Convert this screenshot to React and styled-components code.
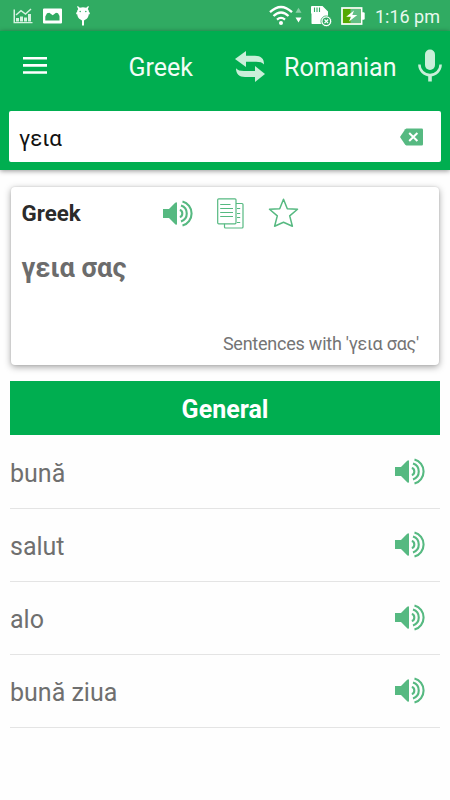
import React from "react";
import styled, { createGlobalStyle } from "styled-components";

const GlobalStyle = createGlobalStyle`
  *, *::before, *::after { box-sizing: border-box; }
  body { margin: 0; background: #fefefe; font-family: Roboto, "Noto Sans", sans-serif; }
`;

const Screen = styled.main`
  width: 450px;
  height: 800px;
  overflow: hidden;
  background: #fefefe;
`;

const StatusBar = styled.div`
  display: flex;
  align-items: center;
  justify-content: space-between;
  height: 31px;
  padding: 0 10px 0 13px;
  background: #30ab62;
`;

const StatusGroup = styled.div`
  display: flex;
  align-items: center;
  gap: ${(p) => p.$gap};
`;

const Clock = styled.time`
  color: #e8f8ee;
  font-size: 18px;
  line-height: 31px;
  margin: 2px 0 0 1px;
`;

const Header = styled.header`
  height: 139px;
  background: #00ae50;
  box-shadow: 0 1px 5px rgba(0, 0, 0, 0.42);
`;

const Toolbar = styled.div`
  display: grid;
  grid-template-columns: 105.5px 106.5px 49px 134px 24px;
  align-items: center;
  height: 70px;
  padding-left: 23px;
`;

const Language = styled.span`
  color: #f2fcf6;
  font-size: 25px;
  line-height: 30px;
  padding-top: 4px;
`;

const IconButton = styled.button`
  display: block;
  padding: 0;
  border: 0;
  background: none;
  line-height: 0;
  svg { display: block; }
`;

const MenuButton = styled(IconButton)`
  padding-bottom: 2px;
`;

const SearchBox = styled.div`
  display: flex;
  align-items: center;
  justify-content: space-between;
  height: 51px;
  margin: 10px 9px 0;
  padding: 0 18px 0 10px;
  border-radius: 2px;
  background: #fff;
`;

const Query = styled.span`
  color: #111;
  font-size: 22.3px;
  line-height: 28px;
  padding-top: 2px;
`;

const Card = styled.section`
  display: flex;
  flex-direction: column;
  height: 178px;
  margin: 17px 11px 16px;
  padding: 11px 20px 9px 10.5px;
  border-radius: 4px;
  background: #fff;
  box-shadow: 0 2px 7px rgba(0, 0, 0, 0.36), 0 0 2px rgba(0, 0, 0, 0.12);
`;

const CardHead = styled.div`
  display: grid;
  grid-template-columns: 141.5px 54px 51px 31px;
  align-items: center;
  height: 31px;
`;

const CardLabel = styled.h2`
  margin: 0;
  padding-bottom: 2px;
  color: #2b2b2b;
  font-size: 22.3px;
  line-height: 28px;
  font-weight: 700;
`;

const Word = styled.p`
  flex: 1;
  margin: 22px 0 0;
  color: #6c6c6c;
  font-size: 27.2px;
  line-height: 34px;
  font-weight: 700;
`;

const Sentences = styled.a`
  align-self: flex-end;
  color: #747474;
  font-size: 18px;
  line-height: 24px;
  letter-spacing: -0.23px;
`;

const SectionTitle = styled.h3`
  height: 54px;
  margin: 0 10px;
  padding-top: 2px;
  background: #00ae50;
  color: #fff;
  text-align: center;
  font-size: 25px;
  line-height: 54px;
  font-weight: 700;
`;

const List = styled.ul`
  margin: 0 10px 0;
  padding: 0;
  list-style: none;
`;

const Row = styled.li`
  display: flex;
  align-items: center;
  justify-content: space-between;
  height: 73px;
  padding: 1px 14px 0 0;
  box-shadow: 0 1px 0 #e4e4e4;
`;

const Translation = styled.span`
  color: #6f6f6f;
  font-size: 25px;
  line-height: 34px;
  padding-top: 3px;
`;

const ICON_GREEN = "#56b981";

const Speaker = () => (
  <svg width="31" height="28" viewBox="0 0 31 28" fill="none" stroke={ICON_GREEN} strokeWidth="2.1">
    <path d="M0 9H6L12.2 2.8Q14 1.5 14 3.2V23.8Q14 25.5 12.2 24.2L6 18H0Z" fill={ICON_GREEN} stroke="none" />
    <path d="M16.8 10Q19.3 10.6 19.3 13.5Q19.3 16.4 16.8 17" />
    <path d="M18 5.6A8.3 8.3 0 0 1 18 21.4" />
    <path d="M19.5 1.4A12.6 12.6 0 0 1 19.5 25.6" />
  </svg>
);

const Copy = () => (
  <svg width="27" height="31" viewBox="0 0 27 31" fill="#fff" stroke={ICON_GREEN} strokeWidth="1.2">
    <rect x="7.5" y="5.5" width="18.5" height="24.5" rx="1" />
    <path d="M20 10.5H23.2M20 15.5H23.2M20 19.5H23.2M20 24.5H23.2" />
    <rect x="0.7" y="0.8" width="18.3" height="25" rx="1" />
    <path d="M3.2 6.5H13.5M3.2 10.5H16M3.2 14.5H16M3.2 18.5H16" />
  </svg>
);

const Star = () => (
  <svg width="31" height="31" viewBox="0 0 31 31" fill="none" stroke={ICON_GREEN} strokeWidth="1.5" strokeLinejoin="round">
    <path d="M15.5 1.3L19.3 10.7L29.5 11.3L21.7 17.9L24.4 28.3L15.5 24.2L6.6 28.3L9.3 17.9L1.5 11.3L11.7 10.7Z" />
  </svg>
);

const Menu = () => (
  <svg width="24" height="17" viewBox="0 0 24 17" fill="#fff">
    <path d="M0 0H24V2.6H0ZM0 7.1H24V9.7H0ZM0 14.2H24V16.8H0Z" />
  </svg>
);

const Swap = () => (
  <svg width="30" height="31" viewBox="0 0 30 31" fill="#c9efd9">
    <path d="M0 8L11 0V4.7H20C26 4.7 29 7.5 29 13.4C27.3 11.3 25 10.7 21 10.7H11V16Z" />
    <path d="M30 23L20 31V26H10C4 26 1 23 1 17.3C2.8 19.5 5 20 9 20H20V15Z" />
  </svg>
);

const Microphone = () => (
  <svg width="24" height="34" viewBox="0 0 24 34" fill="none">
    <rect x="7" y="0.5" width="10" height="20.5" rx="5" fill="#c9efd9" />
    <path d="M1.4 15.5A10.6 10.6 0 0 0 22.6 15.5" stroke="#c9efd9" strokeWidth="2.5" />
    <path d="M12 26V32.5" stroke="#c9efd9" strokeWidth="3.6" />
  </svg>
);

const Clear = () => (
  <svg width="23" height="18" viewBox="0 0 23 18" fill="none">
    <path d="M6.4 0.5H21.7Q23 0.5 23 1.8V16.2Q23 17.5 21.7 17.5H6.4L5.2 16.8L0 9L5.2 1.2Z" fill={ICON_GREEN} />
    <path d="M9.2 5L17.4 13M17.4 5L9.2 13" stroke="#fff" strokeWidth="2" />
  </svg>
);

const ChartIcon = () => (
  <svg width="20" height="16" viewBox="0 0 20 16" fill="#d5f2e0">
    <path d="M0.5 1.5H2V14H19.5V15.2H0.5ZM3 10H6V13.5H3ZM7 8.5H10V13.5H7ZM11 9.5H14V13.5H11ZM15 6H18V13.5H15Z" />
    <path d="M3 7L8 2.7L12.5 6L18 1" fill="none" stroke="#d5f2e0" strokeWidth="1.5" />
  </svg>
);

const PictureIcon = () => (
  <svg width="19" height="16" viewBox="0 0 19 16">
    <path fillRule="evenodd" fill="#fff" d="M1 0.5H18Q19 0.5 19 1.5V14.5Q19 15.5 18 15.5H1Q0 15.5 0 14.5V1.5Q0 0.5 1 0.5ZM2.3 12.5H16.5V8L15 5.3L13 4.8L9.7 7.2L6.3 4.8L4 5.3L2.3 8.5Z" />
  </svg>
);

const DroidIcon = () => (
  <svg width="14" height="20" viewBox="0 0 14 20">
    <path d="M1.8 0L3.8 1.8Q7 0.8 10.2 1.8L12.2 0L12.9 0.7L11.8 3Q13 4.5 13 6.3L13.8 6.6V8.2L12.8 8.3Q12.4 12.2 9.5 13.6L8 14.5V19.5H6V14.5L4.5 13.6Q1.6 12.2 1.2 8.3L0.2 8.2V6.6L1 6.3Q1 4.5 2.2 3L1.1 0.7Z" fill="#fff" />
    <circle cx="4.2" cy="5.5" r="0.75" fill="#30ab62" />
    <circle cx="9.8" cy="5.5" r="0.75" fill="#30ab62" />
  </svg>
);

const WifiIcon = () => (
  <svg width="33" height="21" viewBox="0 0 33 21" fill="none" stroke="#fff" strokeWidth="2.3">
    <path d="M1 7.2Q12 -3.2 23 7.2M4.5 11Q12 4 19.5 11M8 14.6Q12 11.2 16 14.6" />
    <circle cx="12" cy="18" r="2" fill="#fff" stroke="none" />
    <path d="M26.5 7.8L29.5 2.7L32.5 7.8Z" fill="#8ad0a7" stroke="none" />
    <path d="M26.5 12.5H32.5L29.5 17.6Z" fill="#fff" stroke="none" />
  </svg>
);

const StorageIcon = () => (
  <svg width="21" height="22" viewBox="0 0 21 22" fill="none">
    <path d="M1 1H11.5L17 6.5V19H1Q0.5 19 0.5 18V9L0 8V2Q0 1 1 1Z" fill="#fff" />
    <path d="M3.5 2.5V7M6 2.5V7M8.5 2.5V7" stroke="#30ab62" strokeWidth="1.1" />
    <circle cx="15.3" cy="16.3" r="5.4" fill="#fff" stroke="#30ab62" strokeWidth="0.8" />
    <circle cx="15.3" cy="16.3" r="3.7" fill="#30ab62" />
    <path d="M13.5 14.5L17.1 18.1M17.1 14.5L13.5 18.1" stroke="#fff" strokeWidth="1.3" />
  </svg>
);

const BatteryIcon = () => (
  <svg width="24" height="18" viewBox="0 0 24 18" fill="none">
    <rect x="1" y="1" width="19.6" height="16" fill="#55a800" stroke="#fff" strokeWidth="1.7" />
    <path d="M9.5 2H19.8V16H9.5Z" fill="#62bf85" />
    <path d="M21 5.2H22.5Q23.7 5.2 23.7 6.5V11.5Q23.7 12.8 22.5 12.8H21Z" fill="#fff" />
    <path d="M13 3.5L5.2 9.8H10L8 14.5L16.3 7.9H11.3Z" fill="#fff" />
  </svg>
);

const translations = ["bună", "salut", "alo", "bună ziua"];

export default function App() {
  return (
    <Screen>
      <GlobalStyle />
      <StatusBar>
        <StatusGroup $gap="14px">
          <StatusGroup $gap="10px">
            <ChartIcon />
            <PictureIcon />
          </StatusGroup>
          <DroidIcon />
        </StatusGroup>
        <StatusGroup $gap="9px">
          <WifiIcon />
          <StorageIcon />
          <BatteryIcon />
          <Clock>1:16 pm</Clock>
        </StatusGroup>
      </StatusBar>
      <Header>
        <Toolbar>
          <MenuButton aria-label="Menu"><Menu /></MenuButton>
          <Language>Greek</Language>
          <IconButton aria-label="Swap languages"><Swap /></IconButton>
          <Language>Romanian</Language>
          <IconButton aria-label="Voice input"><Microphone /></IconButton>
        </Toolbar>
        <SearchBox>
          <Query>γεια</Query>
          <IconButton aria-label="Clear"><Clear /></IconButton>
        </SearchBox>
      </Header>
      <Card>
        <CardHead>
          <CardLabel>Greek</CardLabel>
          <IconButton aria-label="Listen"><Speaker /></IconButton>
          <IconButton aria-label="Copy"><Copy /></IconButton>
          <IconButton aria-label="Favourite"><Star /></IconButton>
        </CardHead>
        <Word>γεια σας</Word>
        <Sentences>Sentences with 'γεια σας'</Sentences>
      </Card>
      <SectionTitle>General</SectionTitle>
      <List>
        {translations.map((text) => (
          <Row key={text}>
            <Translation>{text}</Translation>
            <IconButton aria-label="Listen"><Speaker /></IconButton>
          </Row>
        ))}
      </List>
    </Screen>
  );
}
